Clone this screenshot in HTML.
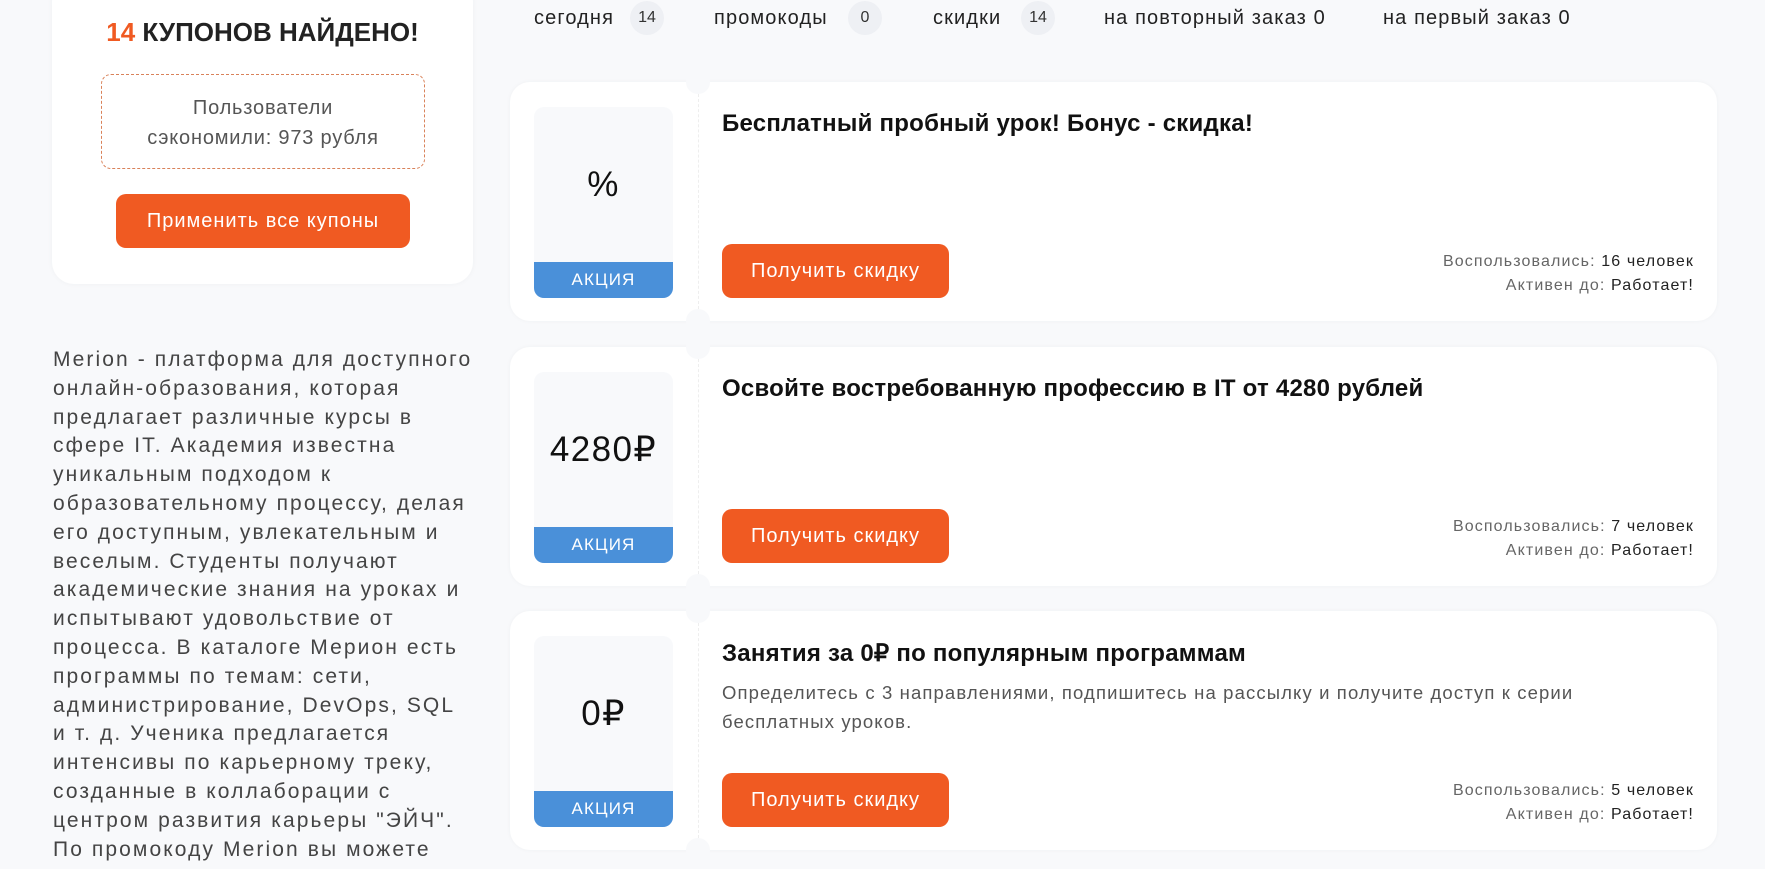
<!DOCTYPE html>
<html><head><meta charset="utf-8"><style>
*{box-sizing:border-box;margin:0;padding:0}
body{width:1765px;height:869px;overflow:hidden;background:#f8f9fb;font-family:"Liberation Sans",sans-serif;color:#222;position:relative;letter-spacing:0.07em}
.lc{position:absolute;left:52px;top:-20px;width:421px;height:304px;background:#fff;border-radius:22px;box-shadow:0 0 6px rgba(0,0,0,.04)}
.ttl{position:absolute;left:52px;width:421px;top:17px;text-align:center;font-size:26px;font-weight:bold;letter-spacing:0}
.ttl span{color:#f05a22}
.dash{position:absolute;left:101px;top:74px;width:324px;height:95px;border:1px dashed #d9825a;border-radius:10px;text-align:center;color:#555;font-size:20px;line-height:30px;padding-top:18px;letter-spacing:0.04em}
.btn{position:absolute;background:#f05a22;color:#fff;border-radius:10px;text-align:center;font-size:20px;letter-spacing:0.05em}
.desc{position:absolute;left:53px;top:346px;width:420px;font-size:21px;line-height:28.8px;color:#444;letter-spacing:0.1em}
.tab{position:absolute;top:5px;font-size:20px;line-height:26px;color:#222}
.bd{position:absolute;top:1px;width:34px;height:34px;border-radius:50%;background:#eef0f4;font-size:16px;line-height:34px;text-align:center;color:#333;letter-spacing:0}
.card{position:absolute;left:510px;width:1207px;height:239px;background:#fff;border-radius:20px;box-shadow:0 0 5px rgba(0,0,0,.04)}
.box{position:absolute;left:24px;top:25px;width:139px;height:191px;background:#f8f9fb;border-radius:10px;overflow:hidden}
.val{position:absolute;top:0;left:0;right:0;height:155px;line-height:155px;text-align:center;font-size:35px;color:#111;letter-spacing:0.04em}
.lab{position:absolute;bottom:0;left:0;right:0;height:36px;background:#4a90d9;color:#fff;text-align:center;line-height:36px;font-size:17px}
.div{position:absolute;left:188px;top:12px;bottom:12px;border-left:1px dashed #eee}
.notch{position:absolute;left:176px;width:24px;height:24px;border-radius:50%;background:#f8f9fb}
.h{position:absolute;left:212px;top:28px;font-size:24px;font-weight:bold;color:#111;letter-spacing:0.01em}
.p{position:absolute;left:212px;top:67px;font-size:18.5px;line-height:29px;color:#555;width:900px}
.meta{position:absolute;right:23px;top:168px;text-align:right;font-size:16px;line-height:24px;color:#666}
.meta b{font-weight:normal;color:#222}
</style></head><body>
<div class="lc"></div>
<div class="ttl"><span>14</span> КУПОНОВ НАЙДЕНО!</div>
<div class="dash">Пользователи<br>сэкономили: 973 рубля</div>
<div class="btn" style="left:116px;top:194px;width:294px;height:54px;line-height:54px">Применить все купоны</div>
<div class="desc">Merion - платформа для доступного онлайн-образования, которая предлагает различные курсы в сфере IT. Академия известна уникальным подходом к образовательному процессу, делая его доступным, увлекательным и веселым. Студенты получают академические знания на уроках и испытывают удовольствие от процесса. В каталоге Мерион есть программы по темам: сети, администрирование, DevOps, SQL и т. д. Ученика предлагается интенсивы по карьерному треку, созданные в коллаборации с центром развития карьеры "ЭЙЧ". По промокоду Merion вы можете</div>

<div class="tab" style="left:534px">сегодня</div><div class="bd" style="left:630px">14</div>
<div class="tab" style="left:714px">промокоды</div><div class="bd" style="left:848px">0</div>
<div class="tab" style="left:933px">скидки</div><div class="bd" style="left:1021px">14</div>
<div class="tab" style="left:1104px">на повторный заказ 0</div>
<div class="tab" style="left:1383px">на первый заказ 0</div>

<div class="card" style="top:82px">
<div class="box"><div class="val">%</div><div class="lab">АКЦИЯ</div></div>
<div class="div"></div><div class="notch" style="top:-12px"></div><div class="notch" style="bottom:-12px"></div>
<div class="h">Бесплатный пробный урок! Бонус - скидка!</div>
<div class="btn" style="left:212px;top:162px;width:227px;height:54px;line-height:54px">Получить скидку</div>
<div class="meta">Воспользовались: <b>16 человек</b><br>Активен до: <b>Работает!</b></div>
</div>
<div class="card" style="top:347px">
<div class="box"><div class="val">4280₽</div><div class="lab">АКЦИЯ</div></div>
<div class="div"></div><div class="notch" style="top:-12px"></div><div class="notch" style="bottom:-12px"></div>
<div class="h">Освойте востребованную профессию в IT от 4280 рублей</div>
<div class="btn" style="left:212px;top:162px;width:227px;height:54px;line-height:54px">Получить скидку</div>
<div class="meta">Воспользовались: <b>7 человек</b><br>Активен до: <b>Работает!</b></div>
</div>
<div class="card" style="top:611px">
<div class="box"><div class="val">0₽</div><div class="lab">АКЦИЯ</div></div>
<div class="div"></div><div class="notch" style="top:-12px"></div><div class="notch" style="bottom:-12px"></div>
<div class="h">Занятия за 0₽ по популярным программам</div>
<div class="p">Определитесь с 3 направлениями, подпишитесь на рассылку и получите доступ к серии бесплатных уроков.</div>
<div class="btn" style="left:212px;top:162px;width:227px;height:54px;line-height:54px">Получить скидку</div>
<div class="meta">Воспользовались: <b>5 человек</b><br>Активен до: <b>Работает!</b></div>
</div>
</body></html>
